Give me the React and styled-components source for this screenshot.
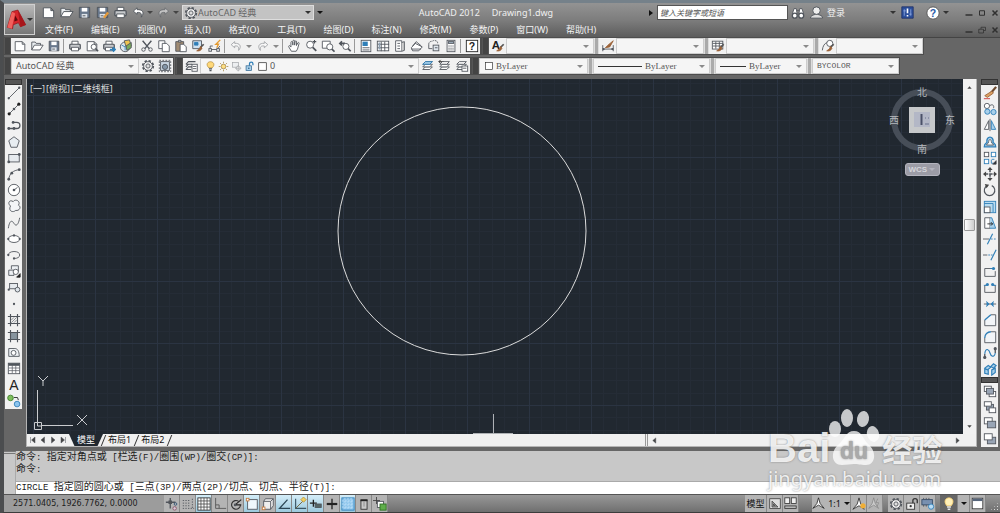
import React from "react";
import styled, { createGlobalStyle, css } from "styled-components";

const GlobalStyle = createGlobalStyle`
  * { box-sizing: border-box; }
  body { margin: 0; background: #666; }
  button, input, select {
    font: inherit;
    color: inherit;
    margin: 0;
    padding: 0;
    border: 0;
    background: none;
    border-radius: 0;
    appearance: none;
    outline: none;
  }
`;

const sans = `"Noto Sans", "Noto Sans CJK SC", sans-serif`;
const mono = `"Liberation Mono", "Noto Sans CJK SC", monospace`;
const serif = `"Liberation Serif", "Noto Sans CJK SC", serif`;

/* ---------- icon drawings, all on a 16 x 16 grid ---------- */

const D = "#50555c";
const B = "#2f7fb8";
const L = "#a9d0ea";
const N = "#9b6238";

const glyph = (char, x, y, size, fill) => (
  <text x={x} y={y} fontSize={size} fill={fill} stroke="none" fontWeight="700" textAnchor="middle" fontFamily="Liberation Sans, sans-serif">
    {char}
  </text>
);
const page = <path d="M2.500 3h8l3 3v7.500h-11z M10.500 3v3h3" fill="#fff" />;
const printer = (
  <>
    <path d="M4.500 6V2.500h7V6" fill="#fff" />
    <rect x="2" y="6" width="12" height="5.500" rx="1" fill="#c5c8cb" strokeWidth="1.400" />
    <path d="M4 9.500h8v4H4z" fill="#fff" />
  </>
);
const floppy = (
  <>
    <path d="M2.500 2.500h11v11h-11z" fill="#69788c" />
    <path d="M5 3h6v4H5z" fill="#fff" stroke="none" />
    <path d="M5 9.500h6v4H5z" fill="#dfe4ea" stroke="none" />
    <path d="M6 11.500h3" />
  </>
);
const folder = (
  <>
    <path d="M2 12.500V3.500h4l1 1.500h5v2" fill="#e9edf0" />
    <path d="M2 12.500L5 7h10l-3.500 5.500z" fill="#fff" />
  </>
);
const gear = (
  <>
    <circle cx="8" cy="8" r="6" strokeDasharray="2.700 2" strokeWidth="2" />
    <circle cx="8" cy="8" r="5" fill="#f4f4f4" />
    <circle cx="8" cy="8" r="2.400" fill="#ddd" />
  </>
);
const brush = (
  <>
    <path d="M14.500 6L10.500 10" stroke="#555" strokeWidth="2" />
    <path d="M11 8.500l1.500 2c-1 3-4 3.500-6 3l3-2z" fill={N} stroke={N} />
  </>
);
const undo = <path d="M6.500 3L2.500 6.500l4 3.500V8c4-.5 5 1 4.500 5 4-5 1-8.500-4.500-8z" fill="#fff" />;
const redo = <path d="M9.500 3l4 3.500-4 3.500V8c-4-.5-5 1-4.500 5-4-5-1-8.500 4.500-8z" fill="#fff" />;
const layers = (
  <>
    <path d="M2 12l3-3h8l-3 3z" fill="#fff" />
    <path d="M2 9l3-3h8l-3 3z" fill="#fff" />
    <path d="M2 6l3-3h8l-3 3z" fill="#fff" />
  </>
);
const mag = (
  <>
    <circle cx="7" cy="6.500" r="4" fill="#fff" />
    <path d="M10 9.500l4 4" strokeWidth="2" />
  </>
);
const dot = (x, y, r = 1.300, fill = D) => <circle cx={x} cy={y} r={r} fill={fill} stroke="none" />;
const sq = (x, y, w, h, fill = "#e6eaee", stroke = D) => (
  <rect x={x} y={y} width={w} height={h} fill={fill} stroke={stroke} />
);

const drawings = {
  page,
  folder,
  floppy,
  printer,
  gear,
  undo,
  redo,
  saveAs: <>{floppy}<path d="M14 8l-4.500 5.500" stroke="#e59b3b" strokeWidth="2.500" /></>,
  preview: <>{page}<circle cx="10" cy="9" r="3" fill="#fff" /><path d="M12 11l3 3" strokeWidth="1.800" /></>,
  plot: <>{printer}<path d="M9 12h6M12.500 9.500L15 12l-2.500 2.500" stroke={B} strokeWidth="2" /></>,
  publish: (
    <>
      <circle cx="7" cy="9" r="5.500" fill="#dfe8ee" />
      <path d="M6 2l6-1 2 7-6 1z" fill="#efc44f" />
      <path d="M8 8l6-4v6l-5 3z" fill="#78a95a" />
      <path d="M3 7l4 2v4" stroke={B} />
    </>
  ),
  cut: (
    <>
      <path d="M3 2l7.500 9M13 2L5.500 11" strokeWidth="1.600" />
      <circle cx="4" cy="12" r="2" />
      <circle cx="12" cy="12" r="2" />
    </>
  ),
  copy: <><path d="M2 2h7v9H2z" fill="#fff" /><path d="M6 5h5l3 3v6.500H6z" fill="#fff" /></>,
  paste: (
    <>
      <path d="M2 3h9v11H2z" fill="#a08b72" />
      <path d="M5 1.500h3v2H5z" fill="#ccc" />
      <path d="M7 6h4l3 3v5.500H7z" fill="#fff" />
    </>
  ),
  match: <><path d="M2 2h10v9H2z" fill="#cfe2f2" /><path d="M4 4h4v3H4z" fill={B} stroke={B} />{brush}</>,
  block: (
    <>
      <path d="M2.500 12V8h3M2.500 12h8l3-4" />
      {sq(1, 11, 3, 3)}
      {sq(10, 11, 3, 3)}
      <path d="M14 1L9 6h3l-2 4" stroke="#e39b32" strokeWidth="1.600" />
    </>
  ),
  hand: (
    <path
      d="M5 14L2 9c-.5-1.500 1-2 2-.5l.5.700V4c0-1.500 1.800-1.500 2 0l.2 3V2.500c0-1.500 2-1.500 2 0V7l.5-4c.2-1.300 1.900-1 1.800.300L10.800 7.500l1.500-3c.6-1 1.900-.4 1.500.700L12 11.500 10.500 14z"
      fill="#fff"
    />
  ),
  zoomRt: <>{mag}<path d="M12 1v4M10 3h4" strokeWidth="1.200" /></>,
  zoomWin: <><path d="M1.500 2.500h9v8h-9z" fill="#fff" /><circle cx="10" cy="9" r="3.500" fill="#fff" /><path d="M12.500 11.500l3 3" strokeWidth="2" /></>,
  zoomPrev: <><path d="M2 5h6M4.500 2.500L2 5l2.500 2.500" strokeWidth="1.800" /><circle cx="9" cy="8.500" r="3.500" fill="#fff" /><path d="M11.500 11l3 3" strokeWidth="2" /></>,
  props: <>{sq(2.5, 1.5, 11, 13, "#fff")}<path d="M4 3h6v5H4z" fill={B} stroke="none" /><path d="M4 10h8M4 12.500h8" /></>,
  center: <>{sq(1.5, 2.5, 13, 11, "#fff")}<path d="M6 3v11M10 3v11M2 6h13M2 10h13" />{sq(3, 4, 2, 8, "#8fa1b3", "none")}</>,
  palette: <><path d="M3 2h7v12H3z" fill="#fff" /><path d="M10 4l3-1v10l-3 1" fill="#ccc" /><path d="M5 5h3M5 8h3M5 11h3" /></>,
  sheets: <><path d="M1.500 10L6 5l8 4-4 4.500H3z" fill="#fff" /><path d="M3 8l4-5 6 5M1.500 11.500h11" /></>,
  markup: <><path d="M2 6c0-4 4-3 5-4s6 0 5 3" strokeDasharray="2 1" />{sq(7, 7, 6.5, 6.5, "#dfe6ec")}<path d="M2 6v5h4M9 10h3" /></>,
  calc: <>{sq(3.5, 1.5, 9, 13, "#fff")}{sq(5, 3, 6, 2, "#9fb2c2")}<path d="M5 8h6M5 10.500h6M5 12.500h6" strokeDasharray="1.500 .8" /></>,
  help: <>{sq(1.5, 1.5, 13, 13, "#fff", "#222")}{glyph("?", 8, 12.5, 12, "#222")}</>,
  textStyle: <>{glyph("A", 5.5, 11, 13, "#222")}{brush}</>,
  dimStyle: <><path d="M2 7v7M14 7v7M2 11.500h12" />{dot(3, 11.5)}{dot(13, 11.5)}<path d="M14 2L8 7l-3 3 5-1z" fill={N} stroke={N} /></>,
  tableStyle: <>{sq(1.5, 2.5, 12, 9, "#fff")}<path d="M2 5h12M2 8h12M5.500 3v8M9.500 3v8" />{brush}</>,
  leaderStyle: <><path d="M1.500 13C2 8 4 5 7 4" /><circle cx="10" cy="5" r="3.500" fill="#fff" />{brush}</>,
  selection: <>{sq(3, 3, 10, 10, "#c9d6e2")}<path d="M1.500 1.500h13v13h-13z" strokeDasharray="2 1.500" /><circle cx="8" cy="9" r="3" fill="#8295a8" /></>,
  layerProps: <><path d="M1 6l3-3h8M1 9l3-3h4M1 12l3-3h4M1 6h5M1 12h6" strokeWidth="1.200" />{sq(8, 6, 6, 8, "#fff")}<path d="M9 8.500h4M9 11h4" /></>,
  layersBlue: <>{layers}<path d="M2 6l3-3h8l-3 3z" fill={L} stroke={B} /></>,
  layerPrev: <><path d="M1 3h5l3 2M3 1L1 3l2 2" stroke="#222" />{layers}</>,
  layerState: <>{layers}{sq(8, 8, 6.5, 6, "#fff")}<path d="M9 10.500h4" /></>,
  bulb: <><path d="M5.500 10C0 4 5 1 8 1s8 3 2.500 9z" fill="#ffd879" stroke="#b18a3c" /><path d="M5.800 11.500h4.400M6.500 14h3" strokeWidth="1.600" /></>,
  bulbLit: <><path d="M5.500 10C1 4 5 1 8 1s7 3 2.500 9z" fill="#fff0b8" stroke="#ffd879" /><path d="M5.800 11.500h4.400M6.500 14h3" stroke="#e8e8e8" strokeWidth="1.600" /></>,
  sun: <><circle cx="8" cy="8" r="3.300" fill="#ffe083" stroke="#9c7b34" /><path d="M8 1v2.500M8 12.500V15M1 8h2.500M12.500 8H15M3 3l2 2M11 11l2 2M13 3l-2 2M5 11l-2 2" stroke="#9c7b34" /></>,
  freeze: <g opacity=".5">{sq(2, 2, 9, 7)}<circle cx="10.500" cy="10.500" r="3" fill="#fff" /><path d="M10.500 6v9M6 10.500h9" /></g>,
  unlock: <><path d="M8 7V4c0-3 5-3 5 0v2" stroke={B} strokeWidth="1.800" />{sq(3, 7, 8, 7, L, "#285f8a")}{dot(7, 10.5, 1.2, "#285f8a")}</>,
  swatch: sq(2.5, 2.5, 11, 11, "#fff", "#222"),
  binoculars: (
    <>
      <path d="M1.500 9L3.500 3h2.500l1 6M14.500 9L12.500 3H10L9 9M7 5h2" fill="#fff" />
      <circle cx="4.300" cy="11" r="2.800" fill="#fff" strokeWidth="1.500" />
      <circle cx="11.700" cy="11" r="2.800" fill="#fff" strokeWidth="1.500" />
    </>
  ),
  user: <><path d="M1.500 14c0-3 3-3 5-4h3c2 1 5 1 5 4z" fill="#ddd" /><circle cx="8" cy="6" r="4" fill="#eee" /></>,
  exchange: <><path d="M1 1h14v14H1z" fill="#2c4f9b" stroke="#1e2f66" /><path d="M4 4v8M12 4v8M3 6h3M10 10h3" stroke="#8fa9e0" /><path d="M8 3v6M8 11v2" stroke="#fff" strokeWidth="2" /></>,
  helpRound: <><circle cx="8" cy="8" r="7" fill="#fff" stroke="#555" />{glyph("?", 8, 12, 12, "#2a5ba8")}</>,
  minimize: <path d="M1 12h14" strokeWidth="3" stroke="#303030" />,
  maximize: <path d="M3 3.500h10v9H3z" strokeWidth="2" stroke="#303030" />,
  restore: <><path d="M6 6V2.500h9V9h-4" stroke="#303030" strokeWidth="1.500" /><path d="M1.500 6.500H11V14H1.500z" stroke="#303030" strokeWidth="1.500" /></>,
  close: <path d="M3 3l10 10M13 3L3 13" strokeWidth="3" stroke="#303030" />,

  line: <><path d="M2 14L14 2" />{dot(2, 14)}{dot(14, 2)}</>,
  xline: <><path d="M2 14L14 2" />{dot(2.5, 13.5, 1.8, "#222")}{dot(8, 8, 1.5)}{dot(13.5, 2.5, 1.8, "#222")}</>,
  polyline: <><path d="M2 12h9c5 0 5-7 0-7H7" strokeWidth="1.500" />{dot(2, 12, 1.6)}{dot(8, 12, 1.6)}{dot(7, 5, 1.6)}</>,
  polygon: <path d="M8 2l6 4.500L11.500 14h-7L2 6.500z" fill="#e8edf1" />,
  rectangle: <>{sq(2, 4, 12, 8.5)}{dot(2, 12.5, 1.6)}{dot(14, 4, 1.6)}</>,
  arc: <><path d="M2 14C3 7 7 4 14 3" />{dot(2, 14, 1.6)}{dot(5.5, 7, 1.6)}{dot(14, 3, 1.6)}</>,
  circle: <><circle cx="8" cy="8" r="6.500" fill="#fff" /><path d="M8 8l4-3" />{dot(8, 8, 1.5)}</>,
  cloud: <path d="M4 8C0 5 3 0 7 3c3-4 9 0 6 4 4 2 1 7-3 6-3 3-9 1-6-5z" fill="#f4f6f8" />,
  spline: <path d="M1.500 14C3 4 6 5 8 8.500S13 11 14.500 2" />,
  ellipse: <><ellipse cx="8" cy="8" rx="6.500" ry="4" fill="#fff" />{dot(8, 4)}{dot(1.5, 8)}{dot(14.5, 8)}</>,
  ellipseArc: <><path d="M8 12c4 0 6.500-1.500 6.500-4S12 4 8 4 1.500 6 1.500 8" />{dot(8, 12)}{dot(1.5, 8)}</>,
  insert: <><path d="M5 6V2h8v7M2 7h6v6H2z" fill="#eef1f4" /><circle cx="10" cy="9" r="3" fill="#fff" /><path d="M15 11v4h-4z" fill="#222" stroke="#222" /></>,
  makeBlock: <>{sq(3, 4, 9, 6)}{dot(2, 11)}<circle cx="12" cy="11" r="2.700" fill="#dde4ea" /></>,
  point: dot(8, 8, 1.3),
  hatch: <><path d="M4 1v14M12 1v14M1 4h14M1 12h14" strokeWidth="1.300" /><path d="M5 8l3-3M5 11l6-6M8 11l3-3" strokeWidth=".7" /></>,
  gradient: <>{sq(4, 4, 8, 8, "#87949e")}<path d="M4 1v14M12 1v14M1 4h14M1 12h14" strokeWidth="1.300" /></>,
  region: <><path d="M2 13V4h7c3 0 5 3 5 9z" fill="#eef1f4" /><circle cx="7.500" cy="9" r="2.800" fill="#fff" /></>,
  table: <>{sq(1.5, 2.5, 13, 12, "#fff")}<path d="M1.500 4h13" strokeWidth="3" /><path d="M6 5v9M10 5v9M2 8h12M2 11h12" strokeWidth=".8" /></>,
  addSelected: <><circle cx="4" cy="4.500" r="3.200" fill="#7fbf5c" stroke="#3f7f2c" /><path d="M8 4h4l1 3" stroke="#222" /><circle cx="11.500" cy="11.500" r="3.200" fill="#8cc4ee" stroke={B} /></>,
  letter: (
    <text x="8" y="13.500" fontSize="16" fill="#222" stroke="none" textAnchor="middle" fontFamily="Liberation Sans, sans-serif">
      A
    </text>
  ),

  erase: <><path d="M15 1L9 8" stroke="#6d4a2e" strokeWidth="2.500" /><path d="M10 6l2 2-7 5-3-2z" fill="#dba263" stroke={N} /><path d="M1 14.500h7" stroke="#c33" /></>,
  copyObj: <><circle cx="4.500" cy="4.500" r="3" fill="#fff" /><circle cx="5" cy="11" r="3" fill={L} stroke={B} /><circle cx="12" cy="11.500" r="3" fill={L} stroke={B} /><path d="M8 4c3-2 5 0 4 3" /></>,
  mirror: <><path d="M6.500 3v10H1.500z" fill="#fff" /><path d="M9.500 3v10h5z" fill={L} stroke={B} /><path d="M8 1v14" /></>,
  offset: <><path d="M1.500 13.500c0-4 2-4 3-5-1.500-8 8.500-8 7 0 1 1 3 1 3 5z" fill={L} stroke={B} strokeWidth="1.500" /><path d="M4 11.500c0-2 3-1.500 2.500-4 0-3 3-3 3 0-.5 2.500 2.500 2 2.500 4z" fill="#fff" /></>,
  array: <>{sq(1.5, 1.5, 5, 5, "#fff")}{sq(9.5, 1.5, 5, 5, "#fff", B)}{sq(1.5, 9.5, 5, 5, "#fff", B)}<path d="M10 9.500h3M9.500 10v4h3" stroke={B} /><path d="M15 11v4h-4z" fill="#222" /></>,
  move: <><path d="M8 2v12M2 8h12" strokeWidth="1.800" strokeDasharray="4 1" /><path d="M8 0l3 3.500H5zM8 16l3-3.500H5zM0 8l3.500-3v6zM16 8l-3.500-3v6z" fill="#444" stroke="none" /></>,
  rotate: <><path d="M10 3a6 6 0 1 1-5 0" strokeWidth="1.300" /><path d="M2 1l5 1-3 4z" fill="#444" stroke="none" /></>,
  scale: <>{sq(1.5, 1.5, 13, 13, "#b9dcf0", B)}<path d="M1.500 4h10v10" stroke={B} />{sq(1.5, 8, 6.5, 6.5, "#fff")}</>,
  stretch: <><path d="M2 2h6v12H2z" fill="#fff" /><path d="M8 2h2l4.500 12H8" fill={L} stroke={B} /><path d="M5 9h6M9 7l2 2-2 2" stroke="#222" /></>,
  trim: <><path d="M5 14l6-12" stroke={B} strokeWidth="1.300" /><path d="M0 8h7" /><path d="M9 8h7" stroke={B} strokeDasharray="2 1.500" /></>,
  extend: <><path d="M9 14l6-12" stroke={B} strokeWidth="1.300" /><path d="M0 8h5" /><path d="M6 8h5" stroke={B} strokeDasharray="2 1" /></>,
  breakPoint: <><path d="M11 4H2v9h12V7" />{dot(12, 4, 1.8, B)}<path d="M8 4h3" stroke={B} /></>,
  breakTwo: <><path d="M3 5H2v8h12V5h-1" /><path d="M1 5h4M11 5h4" stroke={B} />{dot(5, 4, 1.8, B)}{dot(11, 4, 1.8, B)}</>,
  join: <><path d="M1 8h14" /><path d="M4 5l3 3-3 3M12 5L9 8l3 3" fill={B} stroke={B} /></>,
  chamfer: <><path d="M2 8v6.500h12.500V2H9" fill="#f2f5f8" /><path d="M2 8l7-6" stroke={B} strokeWidth="1.500" /></>,
  fillet: <><path d="M2 9v5.500h12.500V2H9" fill="#f2f5f8" /><path d="M2 9c0-4 3-7 7-7" stroke={B} strokeWidth="1.500" /></>,
  blend: <><path d="M2 14V9M14 2v6" strokeWidth="1.500" /><path d="M2 9c1-8 5-5 6-1s5 6 6 0" stroke={B} strokeWidth="1.300" />{dot(2, 13, 1.8)}{dot(14, 3, 1.8)}</>,
  explode: <><path d="M2 7l4-3 3 2-4 3zM2 8v5l4 1V9zM9 5l3-3 3 2-3 3zM10 9l4-2v5l-4 3z" fill={L} stroke={B} strokeWidth="1.300" /></>,
  front: <>{sq(1.5, 2.5, 8, 6, "#fff")}{sq(7, 8.5, 7.5, 6, "#fff")}{sq(4, 5, 8, 6.5, "#99a5b5")}</>,
  back: <>{sq(4, 5, 8, 6.5, "#99a5b5")}{sq(1.5, 2, 8, 5, "#fff")}{sq(7, 9, 7.5, 5.5, "#fff")}</>,
  above: <>{sq(1.5, 2, 9, 7, "#fff")}{sq(5, 6, 9.5, 7.5, "#99a5b5")}</>,
  under: <>{sq(5, 6, 9.5, 7.5, "#99a5b5")}{sq(1.5, 2, 9, 7, "#fff")}</>,

  infer: <><path d="M6 1v12M1 6h11" strokeWidth="1.500" />{sq(4.5, 4.5, 3, 3, "#555")}<circle cx="12" cy="8" r="1.500" stroke="#357" /><circle cx="11" cy="13" r="2" fill="#d9c8d8" stroke="#856" /></>,
  snap: <path d="M2 4h9M2 7h9M2 10h9M2 13h13M13 2v11" strokeDasharray="1.500 1.500" />,
  grid: <>{sq(1, 1, 14, 14, "#fff", "#333")}<path d="M4.500 1v14M8 1v14M11.500 1v14M1 4.500h14M1 8h14M1 11.500h14" stroke="#444" strokeWidth=".9" /></>,
  ortho: <path d="M3 1v12h12M3 9h4v4" stroke="#555" />,
  polar: <><path d="M11 5a5 5 0 1 0 2 4" stroke="#333" strokeWidth="1.300" /><path d="M7 9l7-6M7 9h7" stroke="#222" strokeWidth="1.300" />{dot(7, 9, 1.5)}</>,
  osnap: <>{sq(3, 3, 11, 11, "#eef7fc")}{sq(1.5, 1.5, 3, 3, "#fff", "#c77a3c")}</>,
  osnap3d: <><path d="M3 5l2-3h9v8l-3 4H3z" fill="#eee" /><path d="M3 5h8v9M11 5l3-3" />{sq(1.5, 11.5, 3, 3, "#fff", "#c77a3c")}</>,
  track: <path d="M12 3L3 13h12" stroke="#2c4654" strokeWidth="1.500" />,
  ducs: <><path d="M3 2v11h12" stroke="#3b5666" strokeWidth="1.300" /><path d="M3 13L13 3" stroke="#6b5a30" /><path d="M12 0l3 3-3 3-3-3z" fill="#efd063" stroke="#b8923b" /></>,
  dyn: <><path d="M5 3v8M1 7h8" stroke="#222" strokeWidth="1.500" />{sq(7, 8, 7, 4, "#566")}</>,
  weight: <><path d="M8 2v12" stroke="#222" strokeWidth="1.500" /><path d="M2 8h12" stroke="#222" strokeWidth="2.500" /></>,
  transparency: <>{sq(1, 1, 14, 14, "#8fc6ec", B)}<path d="M1 4.500h14M1 8h14M1 11.500h14M4.500 1v14M8 1v14M11.500 1v14" stroke="#c4e4fa" strokeDasharray="2 1.500" /></>,
  quickProps: <>{sq(4.5, 3, 7, 11, "#c8c8c8", "#333")}<path d="M4 4h8" stroke="#222" strokeWidth="1.600" /><path d="M8 5v6" stroke="#888" /></>,
  cycling: <><path d="M4 0v8M0 4h8" stroke="#444" />{sq(5, 5, 7, 7, "#fff")}{sq(8, 8, 7, 7, "#5fae4b", "#2d6e22")}</>,
  model: <>{sq(1, 1, 14, 13, "#ddd", "#333")}<path d="M4 4v8h8zM6 8v2h2z" fill="#999" stroke="#444" /></>,
  views: <>{sq(1, 1, 6, 7, "#eee", "#333")}{sq(9, 1, 6, 7, "#eee", "#333")}{sq(1, 11, 14, 3, "#bbb", "#333")}</>,
  scaleMark: <path d="M8 1L6 8l-5 6 7-4 7 4-5-6z" fill="#fff" stroke="#222" />,
  scaleSun: <><path d="M8 1L6 8l-5 6 7-4 6 4-4-6z" fill="#fff" stroke="#333" />{dot(12.5, 10, 3, "#f0ae35")}</>,
  scaleAuto: <path d="M7 1L5 8l-4 6 6-4 6 4-4-6zM12 2l-2 5h3l-2 5" fill="#ccc" stroke="#888" />,
  lockUi: <><path d="M9 7V4c0-3 5-3 5 0v3" stroke="#333" strokeWidth="1.500" />{sq(2, 7, 9, 7, "#eee", "#333")}{dot(6.5, 10.5, 1.3, "#333")}</>,
  hardware: <>{sq(1, 3, 12, 6, "#7890b0", "#334a68")}<path d="M3 1v2M6 1v2M9 1v2M3 9v2M6 9v2" /><circle cx="11.500" cy="11" r="3" fill="#b9dcf5" stroke={B} /></>,
  clean: <>{sq(1.5, 1.5, 13, 13, "#fff", "#333")}<path d="M2 3.500h12" stroke="#56657b" strokeWidth="3" /></>,
  first: <path d="M3 2v12M12 2v12L5 8z" fill="#444" />,
  prev: <path d="M11 2v12L4 8z" fill="#444" />,
  next: <path d="M5 2v12l7-6z" fill="#444" />,
  last: <path d="M13 2v12M4 2v12l7-6z" fill="#444" />,
  up: <path d="M3 11h10L8 5z" fill="#444" stroke="none" />,
  down: <path d="M3 5h10l-5 6z" fill="#444" stroke="none" />,
  brandMark: (
    <>
      <path d="M1 14L4.500 2 9 .8 15 12l-4 1.500-1.500-3-4 1.500-.5 3z" fill="#d3252b" stroke="#8a1014" strokeWidth=".5" />
      <path d="M1 14L4.500 2 7 3.500 5 12l-.5 3z" fill="#f0605c" stroke="none" />
      <path d="M7 5l2 3.500-2.700 1z" fill="#5c0a0c" stroke="none" />
      <path d="M9 .8L15 12l-4 1.500z" fill="#a8161b" stroke="none" />
    </>
  ),
};

const Svg = styled.svg`
  display: block;
  flex: none;
  width: ${(p) => p.$size}px;
  height: ${(p) => p.$size}px;
  fill: none;
  stroke: ${D};
  opacity: ${(p) => (p.$faded ? 0.5 : 1)};
`;

function Icon({ name, size = 12, faded }) {
  return (
    <Svg viewBox="0 0 16 16" $size={size} $faded={faded} aria-hidden="true">
      {drawings[name]}
    </Svg>
  );
}

const Caret = styled.span`
  flex: none;
  width: 0;
  height: 0;
  border: 3px solid transparent;
  border-bottom-width: 0;
  border-top-color: ${(p) => p.$color || "#8a8a8a"};
`;

/* ---------- window frame and header ---------- */

const Window = styled.div`
  position: relative;
  display: flex;
  flex-direction: column;
  min-height: 100vh;
  min-width: 960px;
  border-top: 3px solid #75818a;
  border-left: 4px solid #4b4d4f;
  border-bottom: 2px solid #3c3c3c;
  background: #666;
  font: 9px/12px ${sans};
  color: #333;
`;

const Header = styled.header`
  display: flex;
  height: 35px;
  border-bottom: 1px solid #444;
  background: linear-gradient(#939393, #7d7d7d 50%, #5c5c5c);
`;

const AppButton = styled.button`
  display: flex;
  align-items: center;
  justify-content: space-between;
  width: 31px;
  height: 31px;
  margin-top: 1px;
  padding: 0 1px;
  border: 1px solid #d0d0d0;
  background: linear-gradient(#b9b9b9, #777);
`;

const HeaderRows = styled.div`
  flex: 1;
  display: flex;
  flex-direction: column;
`;

const TitleRow = styled.div`
  display: flex;
  align-items: center;
  height: 19px;
  padding-left: 4px;
`;

const MenuRow = styled.nav`
  display: flex;
  align-items: center;
  justify-content: space-between;
  height: 15px;
  padding-left: 10px;
`;

const MenuList = styled.div`
  display: flex;
  gap: 18px;
`;

const MenuItem = styled.button`
  color: #f4f4f4;
  white-space: nowrap;
`;

const IconButton = styled.button`
  display: flex;
  align-items: center;
  justify-content: center;
  flex: none;
  width: ${(p) => p.$width || 17}px;
  height: 16px;
`;

const WorkspaceBox = styled.div`
  display: flex;
  align-items: center;
  width: 132px;
  height: 15px;
  margin-right: 3px;
  padding: 0 2px 0 1px;
  border: 1px solid #ddd;
  background: #c3c3c3;
  color: #666;
`;

const Title = styled.h1`
  flex: 1;
  display: flex;
  justify-content: center;
  gap: 12px;
  margin: 0;
  font: 400 9px/14px ${sans};
  color: #f0f0f0;
`;

const Marker = styled.span`
  border: 3px solid transparent;
  border-left: 4px solid #111;
  border-right-width: 0;
  margin-right: 4px;
`;

const SearchInput = styled.input`
  width: 131px;
  height: 15px;
  padding: 0 2px;
  border: 1px solid #555;
  background: #fff;
  font-size: 8px;
  &::placeholder { color: #555; font-style: italic; opacity: 1; }
`;

const SignIn = styled.button`
  display: flex;
  align-items: center;
  gap: 3px;
  margin: 0 45px 0 1px;
  color: #f2f2f2;
`;

const WindowButtons = styled.div`
  display: flex;
  width: 38px;
  margin-left: ${(p) => p.$offset || 0}px;
`;

/* ---------- toolbars ---------- */

const Toolbars = styled.div`
  display: flex;
  flex-direction: column;
  gap: 4px;
  padding-bottom: 5px;
`;

const ToolRow = styled.div`
  display: flex;
  height: 16px;
`;

const Bar = styled.div`
  display: flex;
  align-items: center;
  height: 16px;
  margin-right: ${(p) => p.$after || 0}px;
  background: #f1f1f1;
  outline: 1px solid #4d4d4d;
`;

const Grip = styled.span`
  flex: none;
  width: ${(p) => (p.$light ? 5 : 7)}px;
  height: 16px;
  border: 1px solid ${(p) => (p.$light ? "#ddd" : "#555")};
  border-width: 0 1px;
  background: ${(p) => (p.$light ? "#aaa" : "#444")};
`;

const Divider = styled.span`
  flex: none;
  width: 4px;
  height: 14px;
  border-left: 1px solid #999;
  margin-left: 1px;
  margin-right: -1px;
`;

const comboFonts = {
  sans: `9px/14px ${sans}`,
  serif: `9px/14px ${serif}`,
  mono: `8px/14px ${mono}`,
};

const Combo = styled.label`
  display: flex;
  align-items: center;
  gap: 2px;
  width: ${(p) => p.$width}px;
  height: 16px;
  padding: 0 4px;
  border: 1px solid #ccc;
  background: #f5f5f5;
  font: ${(p) => comboFonts[p.$face]};
  color: #555;
`;

const Select = styled.select`
  flex: 1;
  min-width: 0;
`;

const LineSample = styled.span`
  width: ${(p) => p.$width}px;
  border-top: 1px solid #333;
  margin-right: 1px;
`;

/* ---------- main area ---------- */

const Main = styled.main`
  flex: 1;
  display: flex;
  gap: 4px;
  padding: 0 2px 4px 1px;
`;

const Side = styled.div`
  flex: none;
  width: 17px;
`;

const PaletteHead = styled.div`
  height: 6px;
  border: 1px solid #333;
  background: #555;
`;

const PaletteBody = styled.div`
  display: flex;
  flex-direction: column;
  justify-content: space-between;
  height: ${(p) => p.$height}px;
  background: #f1f1f1;
`;

const Frame = styled.section`
  flex: 1;
  min-width: 0;
  display: flex;
  flex-direction: column;
  border: 1px solid #b5b5b5;
  border-top: 0;
`;

const CanvasRow = styled.div`
  flex: 1;
  display: flex;
`;

const Canvas = styled.div`
  position: relative;
  flex: 1;
  background: #212830;
  overflow: hidden;
`;

const Drawing = styled.svg`
  position: absolute;
  inset: 0;
  width: 100%;
  height: 100%;
`;

const ViewLabel = styled.div`
  position: absolute;
  left: 3px;
  top: 4px;
  display: flex;
  gap: 1px;
  color: #ddd;
  font-size: 9px;
`;

const Compass = styled.div`
  position: absolute;
  right: 7px;
  top: 1px;
  width: 68px;
`;

const WcsButton = styled.button`
  display: flex;
  align-items: center;
  justify-content: space-between;
  width: 35px;
  height: 13px;
  margin: 0 auto;
  padding: 0 4px 0 3px;
  border: 1px solid #b4b4be;
  border-radius: 3px;
  background: #9c9ca6;
  color: #d4d4da;
  font: 700 8px/11px "Liberation Sans", sans-serif;
`;

const VScroll = styled.div`
  display: flex;
  flex-direction: column;
  align-items: center;
  width: 13px;
  background: #f1f1f1;
`;

const Thumb = styled.button`
  width: 11px;
  height: 12px;
  margin: ${(p) => p.$margin};
  border: 1px solid #999;
  border-radius: 1px;
  background: linear-gradient(90deg, #fff, #ccc);
`;

const TabRow = styled.div`
  display: flex;
  align-items: center;
  height: 12px;
  padding-left: 1px;
  background: #f0f0f0;
`;

const Tab = styled.button`
  height: 12px;
  padding: 0 5px;
  margin-left: ${(p) => (p.$active ? 1 : -1)}px;
  line-height: 12px;
  white-space: nowrap;
  ${(p) =>
    p.$active
      ? css`
          background: #212830;
          color: #fff;
          padding: 0 8px;
          clip-path: polygon(0 0, 100% 0, 84% 100%, 16% 100%);
        `
      : css`
          color: #111;
        `}
`;

const Slash = styled.span`
  width: 1px;
  height: 11px;
  background: #333;
  transform: skewX(-22deg);
`;

const HScroll = styled.div`
  display: flex;
  align-items: center;
  justify-content: space-between;
  width: 318px;
  height: 12px;
  margin: 0 13px 0 auto;
  border-left: 3px double #999;
`;

/* ---------- command line and status bar ---------- */

const Command = styled.section`
  display: flex;
  background: #c8c8c8;
  font: 9px/11px ${mono};
  color: #222;
`;

const CommandGrip = styled.div`
  width: 12px;
  border-top: 3px double #777;
  border-right: 1px solid #aaa;
`;

const CommandBody = styled.div`
  flex: 1;
`;

const History = styled.div`
  height: 31px;
  padding-top: 1px;
  border-bottom: 1px solid #aaa;
`;

const Prompt = styled.label`
  display: flex;
  align-items: center;
  height: 12px;
  background: #fff;
  white-space: pre;
`;

const PromptInput = styled.input`
  flex: 1;
  height: 11px;
`;

const Han = styled.span`
  font-size: 10px;
`;

const StatusBar = styled.footer`
  display: flex;
  align-items: center;
  height: 18px;
  border-top: 1px solid #555;
  background: linear-gradient(#989898, #6f6f6f);
  color: #111;
`;

const Coordinates = styled.output`
  width: 160px;
  height: 17px;
  padding-left: 9px;
  background: #9c9c9c;
  font: 8px/17px "DejaVu Sans", sans-serif;
  color: #1c1c1c;
`;

const Toggle = styled.button`
  display: flex;
  align-items: center;
  justify-content: center;
  gap: 3px;
  flex: none;
  width: ${(p) => p.$width || 16}px;
  height: 17px;
  border-right: 1px solid #888;
  background: ${(p) => (p.$on ? "linear-gradient(#d4edf8, #9cc9dd)" : p.$dark ? "#666" : "#b4b4b4")};
  color: #111;
`;

const Spacer = styled.span`
  flex: ${(p) => (p.$width ? "none" : 1)};
  width: ${(p) => p.$width || 0}px;
`;

const ResizeGrip = styled.span`
  width: 9px;
  height: 9px;
  margin: 6px 1px 0 4px;
  background: radial-gradient(#ddd 1px, transparent 1px) 0 0 / 3px 3px;
  clip-path: polygon(100% 0, 100% 100%, 0 100%);
`;

/* ---------- site mark over the lower right corner ---------- */

const SiteMark = styled.div`
  position: absolute;
  right: 54px;
  bottom: 20px;
  width: 178px;
  color: rgba(255, 255, 255, 0.85);
  white-space: nowrap;
  pointer-events: none;
  text-shadow: 0 0 2px rgba(90, 90, 90, 0.7);
`;

const MarkTop = styled.div`
  display: flex;
  align-items: flex-end;
  height: 57px;
  font: 700 40px/36px "Liberation Sans", sans-serif;
`;

const Paw = styled.svg`
  flex: none;
  overflow: visible;
`;

const MarkHan = styled.span`
  margin-left: 4px;
  font: 700 30px/36px "Noto Sans CJK SC", sans-serif;
`;

const MarkUrl = styled.div`
  font: 400 20px/26px "Noto Sans", sans-serif;
`;

const menus = ["文件(F)", "编辑(E)", "视图(V)", "插入(I)", "格式(O)", "工具(T)", "绘图(D)", "标注(N)", "修改(M)", "参数(P)", "窗口(W)", "帮助(H)"];

const standardTools = [
  ["page", "folder", "floppy"],
  ["printer", "preview", "plot", "publish"],
  ["cut", "copy", "paste", "match", "block"],
  ["undo", "redo"],
  ["hand", "zoomRt", "zoomWin", "zoomPrev"],
  ["props", "center", "palette", "sheets", "markup", "calc"],
  ["help"],
];

const drawTools = ["line", "xline", "polyline", "polygon", "rectangle", "arc", "circle", "cloud", "spline", "ellipse", "ellipseArc", "insert", "makeBlock", "point", "hatch", "gradient", "region", "table", "letter", "addSelected"];
const modifyTools = ["erase", "copyObj", "mirror", "offset", "array", "move", "rotate", "scale", "stretch", "trim", "extend", "breakPoint", "breakTwo", "join", "chamfer", "fillet", "blend", "explode"];
const orderTools = ["front", "back", "above", "under"];

const toggles = [
  ["infer"], ["snap"], ["grid", true], ["ortho"], ["polar"], ["osnap", true], ["osnap3d"],
  ["track", true], ["ducs", true], ["dyn", true], ["weight"], ["transparency", true], ["quickProps"], ["cycling"],
];

function Tool({ name, width, size = 14, faded }) {
  return (
    <IconButton $width={width} aria-label={name}>
      <Icon name={name} size={size} faded={faded} />
    </IconButton>
  );
}

function Dropdown({ label, value = "", width, face = "sans", children }) {
  return (
    <Combo $width={width} $face={face}>
      {children}
      <Select aria-label={label} defaultValue={value}>
        <option>{value}</option>
      </Select>
      <Caret />
    </Combo>
  );
}

function Mixed({ text }) {
  return text
    .split(/([\u3001\u4e00-\u9fff]+)/)
    .map((part, i) => (i % 2 ? <Han key={i}>{part}</Han> : part));
}

function Palette({ tools, height }) {
  return (
    <>
      <PaletteHead />
      <PaletteBody $height={height}>
        {tools.map((t) => <Tool key={t} name={t} />)}
      </PaletteBody>
    </>
  );
}

function TopBar() {
  return (
    <Header>
      <AppButton aria-label="Application menu">
        <Icon name="brandMark" size={21} />
        <Caret $color="#333" />
      </AppButton>
      <HeaderRows>
        <TitleRow>
          {["page", "folder", "floppy", "saveAs", "printer", "undo"].map((t) => (
            <Tool key={t} name={t} width={18} size={15} />
          ))}
          <Caret $color="#444" />
          <Tool name="redo" width={20} size={15} faded />
          <Caret $color="#444" />
          <Spacer $width={3} />
          <WorkspaceBox>
            <Icon name="gear" size={14} />
            <Select aria-label="Workspace" defaultValue="AutoCAD 经典">
              <option>AutoCAD 经典</option>
            </Select>
            <Caret $color="#333" />
          </WorkspaceBox>
          <Caret $color="#111" />
          <Title>
            <span>AutoCAD 2012</span>
            <span>Drawing1.dwg</span>
          </Title>
          <Marker />
          <SearchInput aria-label="Search" placeholder="键入关键字或短语" />
          <Tool name="binoculars" width={20} />
          <SignIn>
            <Icon name="user" size={15} />
            登录
          </SignIn>
          <Caret $color="#333" />
          <Tool name="exchange" width={22} size={13} />
          <Spacer $width={5} />
          <Tool name="helpRound" width={20} />
          <Caret $color="#333" />
          <WindowButtons $offset={13}>
            {["minimize", "maximize", "close"].map((t) => <Tool key={t} name={t} width={13} size={8} />)}
          </WindowButtons>
        </TitleRow>
        <MenuRow>
          <MenuList>
            {menus.map((m) => <MenuItem key={m}>{m}</MenuItem>)}
          </MenuList>
          <WindowButtons>
            {["minimize", "restore", "close"].map((t) => <Tool key={t} name={t} width={13} size={8} />)}
          </WindowButtons>
        </MenuRow>
      </HeaderRows>
    </Header>
  );
}

function ToolbarArea() {
  return (
    <Toolbars>
      <ToolRow>
        <Bar $after={2}>
          <Grip />
          {standardTools.map((group, i) => (
            <React.Fragment key={group[0]}>
              {i > 0 && <Divider />}
              {group.map((t) => {
                const history = t === "undo" || t === "redo";
                return (
                  <React.Fragment key={t}>
                    <Tool name={t} faded={history} />
                    {history && <IconButton $width={10} aria-label={`${t} list`}><Caret /></IconButton>}
                  </React.Fragment>
                );
              })}
            </React.Fragment>
          ))}
        </Bar>
        <Bar>
          <Grip />
          <Tool name="textStyle" />
          <Dropdown label="Text style" width={88} />
          <Grip $light />
          <Tool name="dimStyle" />
          <Dropdown label="Dimension style" width={88} />
          <Grip $light />
          <Tool name="tableStyle" />
          <Dropdown label="Table style" width={88} />
          <Grip $light />
          <Tool name="leaderStyle" />
          <Dropdown label="Leader style" width={87} />
        </Bar>
      </ToolRow>
      <ToolRow>
        <Bar $after={3}>
          <Grip />
          <Dropdown label="Workspace" value="AutoCAD 经典" width={128} />
          <Tool name="gear" />
          <Tool name="selection" />
        </Bar>
        <Bar $after={2}>
          <Grip />
          <Tool name="layerProps" />
          <Dropdown label="Layer" value="0" width={219}>
            {["bulb", "sun", "freeze", "unlock", "swatch"].map((t) => (
              <Icon key={t} name={t} size={11} />
            ))}
          </Dropdown>
          <Tool name="layersBlue" />
          <Tool name="layerPrev" />
          <Tool name="layerState" />
        </Bar>
        <Bar>
          <Grip />
          <Dropdown label="Color" value="ByLayer" width={109} face="serif">
            <Icon name="swatch" size={10} />
          </Dropdown>
          <Grip $light />
          <Dropdown label="Linetype" value="ByLayer" width={117} face="serif">
            <LineSample $width={44} />
          </Dropdown>
          <Grip $light />
          <Dropdown label="Lineweight" value="ByLayer" width={92} face="serif">
            <LineSample $width={26} />
          </Dropdown>
          <Grip $light />
          <Dropdown label="Plot style" value="BYCOLOR" width={87} face="mono" />
        </Bar>
      </ToolRow>
    </Toolbars>
  );
}

function ModelSpace() {
  return (
    <Canvas>
      <Drawing aria-hidden="true">
        <defs>
          <pattern id="minor" x="6" y="16" width="62" height="62" patternUnits="userSpaceOnUse">
            <path
              d="M12.500 0v62M25.500 0v62M37.500 0v62M50.500 0v62M0 12.500h62M0 25.500h62M0 37.500h62M0 50.500h62"
              stroke="#252c36"
            />
            <path d="M.5 0v62M0 .5h62" stroke="#2b3442" />
          </pattern>
        </defs>
        <rect width="100%" height="100%" fill="url(#minor)" />
        <circle cx="435" cy="152" r="124" fill="none" stroke="#dcdcdc" />
        <g stroke="#c9cbce" fill="none">
          <path d="M10.500 311v32M14 346.500h32" />
          <path d="M7.500 343.500h7v7h-7zM10.500 343v4h4" />
          <path d="M11 297l5 5 5-5M16 302v5M50 336l10 10M60 336l-10 10" />
        </g>
        <path d="M466.500 335v21M446 354.500h40" stroke="#aeb1b5" />
      </Drawing>
      <ViewLabel>
        <span>[一]</span>
        <span>[俯视]</span>
        <span>[二维线框]</span>
      </ViewLabel>
      <Compass>
        <svg width="68" height="80" viewBox="0 0 68 80" fontFamily={`"Noto Sans CJK SC", sans-serif`} fontSize="10" fill="#b5b8bc" textAnchor="middle">
          <circle cx="34" cy="40" r="28" fill="none" stroke="#474e58" strokeWidth="6" />
          <rect x="21" y="27" width="26" height="26" fill="#c6c8ca" />
          <rect x="26" y="32" width="16" height="15" fill="#b3b7c6" />
          <path d="M33.500 34v11" stroke="#4a5068" strokeWidth="2" />
          <path d="M37 38h1M40 38h1M37 44h4" stroke="#69708c" />
          <text x="34" y="16">北</text>
          <text x="34" y="73">南</text>
          <text x="6" y="44">西</text>
          <text x="62" y="44">东</text>
        </svg>
        <WcsButton>
          WCS
          <Caret $color="#b4b4be" />
        </WcsButton>
      </Compass>
    </Canvas>
  );
}

export default function App() {
  return (
    <>
      <GlobalStyle />
      <Window>
        <TopBar />
        <ToolbarArea />
        <Main>
          <Side><Palette tools={drawTools} height={324} /></Side>
          <Frame>
            <CanvasRow>
              <ModelSpace />
              <VScroll>
                <Tool name="up" width={13} size={7} />
                <Thumb $margin="124px 0 auto" aria-label="Vertical scroll" />
                <Tool name="down" width={13} size={7} />
              </VScroll>
            </CanvasRow>
            <TabRow>
              {["first", "prev", "next", "last"].map((t) => <Tool key={t} name={t} width={10} size={8} />)}
              <Tab $active>模型</Tab>
              <Slash />
              <Tab>布局1</Tab>
              <Slash />
              <Tab>布局2</Tab>
              <Slash />
              <HScroll>
                <Tool name="prev" width={12} size={7} />
                <Tool name="next" width={12} size={7} />
              </HScroll>
            </TabRow>
          </Frame>
          <Side>
            <Palette tools={modifyTools} height={292} />
            <Palette tools={orderTools} height={64} />
          </Side>
        </Main>
        <Command>
          <CommandGrip />
          <CommandBody>
            <History>
              <div><Mixed text="命令: 指定对角点或 [栏选(F)/圈围(WP)/圈交(CP)]:" /></div>
              <div><Mixed text="命令:" /></div>
            </History>
            <Prompt>
              <span><Mixed text="CIRCLE 指定圆的圆心或 [三点(3P)/两点(2P)/切点、切点、半径(T)]:" /></span>
              <PromptInput />
            </Prompt>
          </CommandBody>
        </Command>
        <StatusBar>
          <Coordinates>2571.0405, 1926.7762, 0.0000</Coordinates>
          {toggles.map(([name, on]) => (
            <Toggle key={name} $on={on} aria-label={name}><Icon name={name} size={14} /></Toggle>
          ))}
          <Spacer />
          <Toggle $width={22}>模型</Toggle>
          <Toggle aria-label="Layout"><Icon name="model" size={12} /></Toggle>
          <Toggle aria-label="Quick view"><Icon name="views" size={13} /></Toggle>
          <Spacer $width={13} />
          <Toggle $width={39}><Icon name="scaleMark" size={13} />1:1<Caret $color="#111" /></Toggle>
          <Toggle aria-label="Annotation visibility"><Icon name="scaleSun" size={14} /></Toggle>
          <Toggle aria-label="Annotation scale"><Icon name="scaleAuto" size={13} /></Toggle>
          <Spacer $width={5} />
          <Toggle aria-label="Workspace switching"><Icon name="gear" size={14} /></Toggle>
          <Toggle aria-label="Lock"><Icon name="lockUi" size={14} /></Toggle>
          <Toggle aria-label="Hardware"><Icon name="hardware" size={14} /></Toggle>
          <Spacer $width={4} />
          <Toggle $width={18} $dark aria-label="Isolate"><Icon name="bulbLit" size={14} /></Toggle>
          <Toggle $width={12} aria-label="Status menu"><Caret $color="#111" /></Toggle>
          <Toggle aria-label="Clean screen"><Icon name="clean" size={13} /></Toggle>
          <ResizeGrip />
        </StatusBar>
        <SiteMark>
          <MarkTop>
            <span>Bai</span>
            <Paw width="48" height="57" viewBox="0 0 48 57">
              <g fill="#fff" opacity=".75">
                <ellipse cx="5" cy="20" rx="6" ry="8" />
                <ellipse cx="17" cy="9" rx="6" ry="9" />
                <ellipse cx="33" cy="10" rx="6" ry="8" transform="rotate(10 33 10)" />
                <ellipse cx="43" cy="25" rx="6" ry="8" transform="rotate(-15 43 25)" />
                <path d="M24 22c8 0 9 8 14 13 9 7 8 21-2 21-6 0-8-1-12-1s-7 1-12 1c-11 0-12-14-3-21 6-5 7-13 15-13z" />
              </g>
              <text x="24" y="50" textAnchor="middle" fontFamily="Liberation Sans, sans-serif" fontWeight="700" fontSize="23" fill="#aaa">du</text>
            </Paw>
            <MarkHan>经验</MarkHan>
          </MarkTop>
          <MarkUrl>jingyan.baidu.com</MarkUrl>
        </SiteMark>
      </Window>
    </>
  );
}
